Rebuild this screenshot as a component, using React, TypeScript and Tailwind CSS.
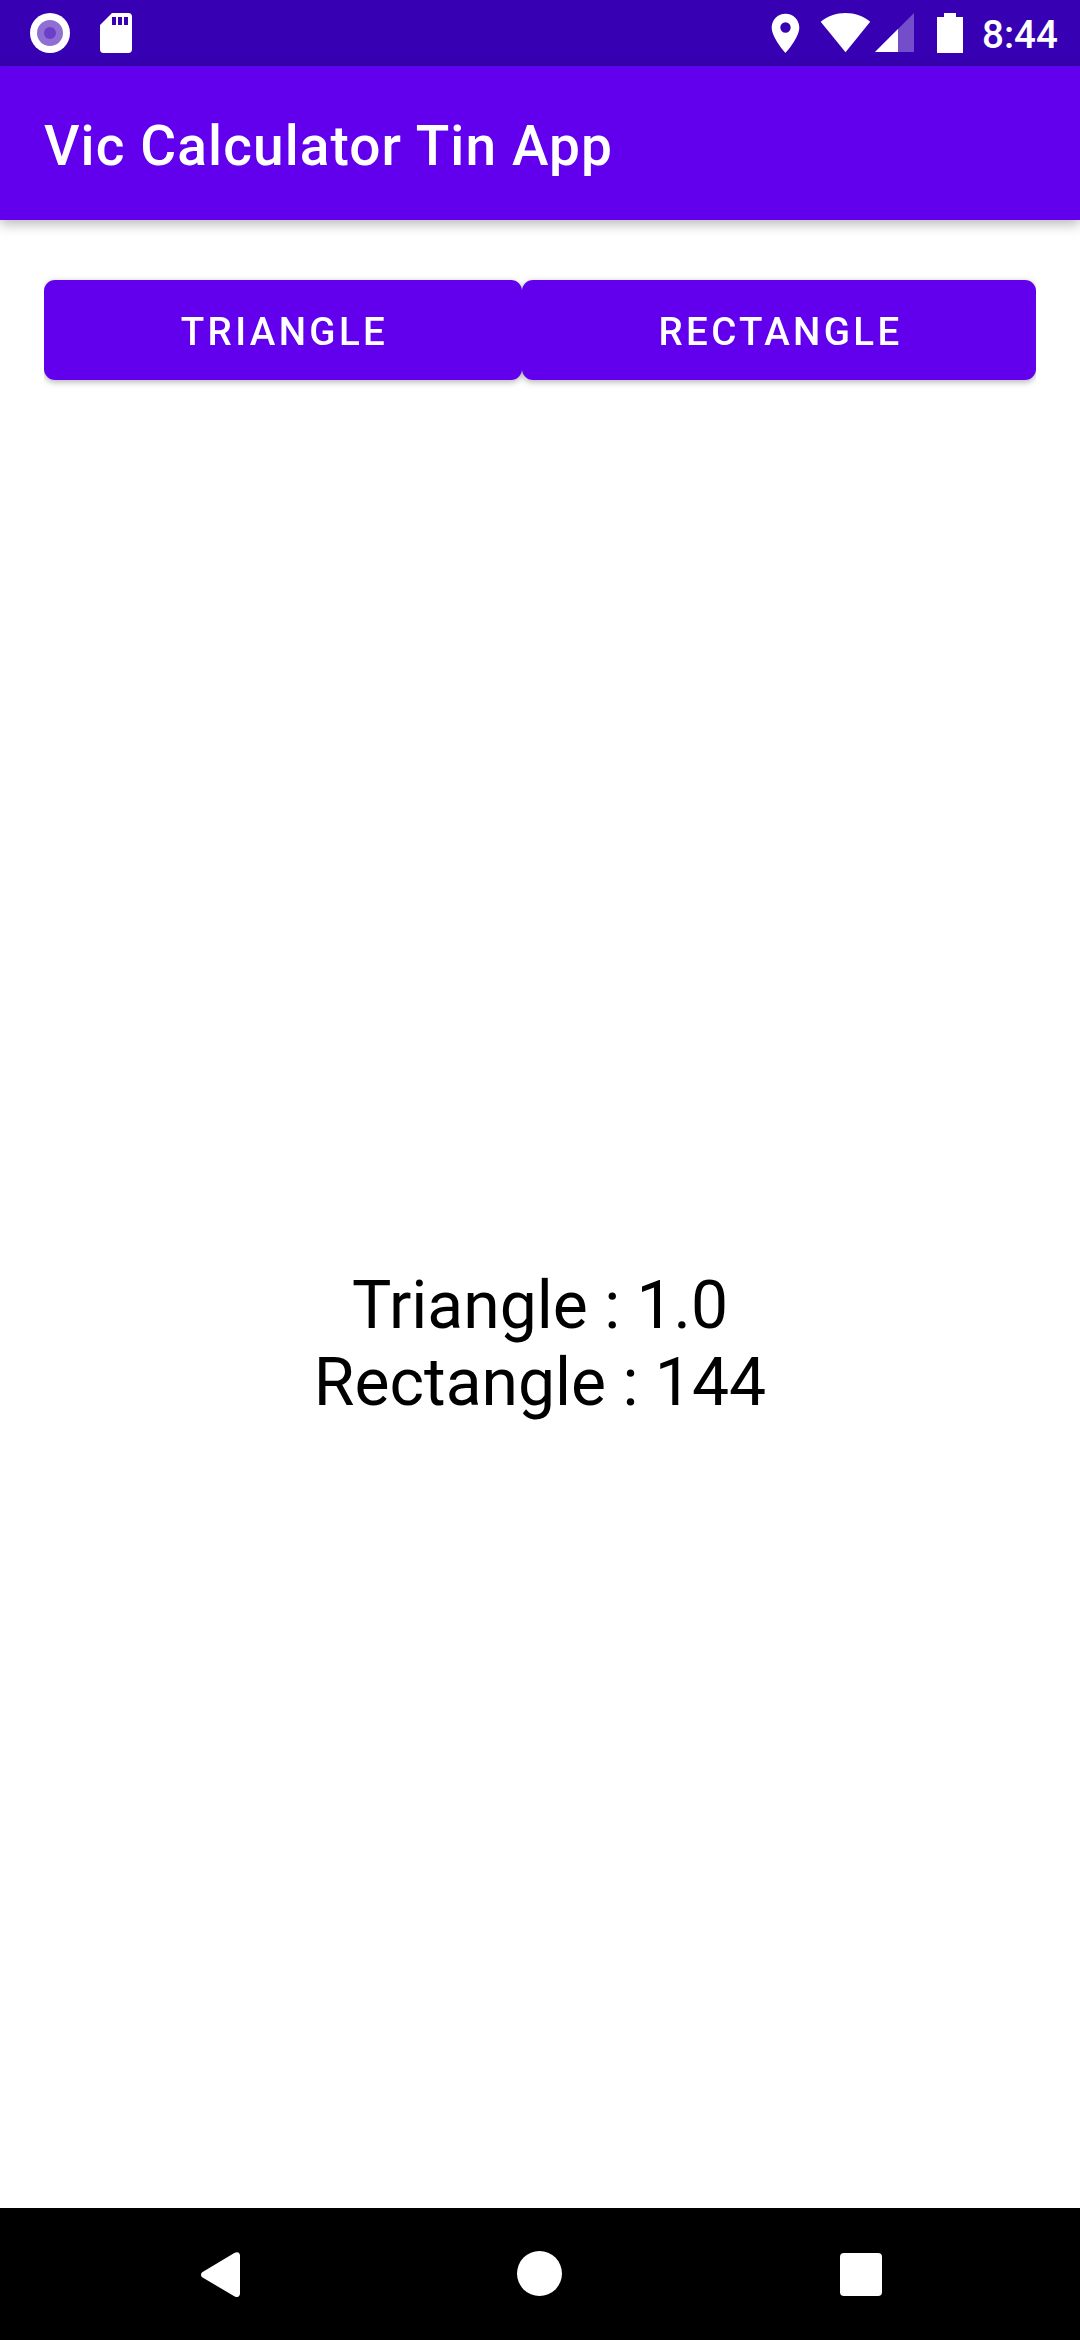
import type { ReactNode } from "react";

function StatusBar() {
  return (
    <header className="flex h-[66px] items-start justify-between bg-[#3700b3] pr-[22px] pl-[30px] text-white">
      <div className="flex pt-[13px]">
        <svg width="40" height="40" viewBox="0 0 40 40">
          <circle cx="20" cy="20" r="20" fill="#fff" />
          <circle cx="20" cy="20" r="13" fill="#8f6fd4" />
          <circle cx="20" cy="20" r="6" fill="#6c3fc8" />
        </svg>
        <svg className="ml-[30px]" width="32" height="40" viewBox="4 2 16 20" fill="#fff">
          <path d="M18.3 2H10L4 8v12.3C4 21.3 4.7 22 5.7 22h12.6c1 0 1.7-.7 1.7-1.7V3.7C20 2.7 19.3 2 18.3 2zm-6.3 6h-2V4h2v4zm3 0h-2V4h2v4zm3 0h-2V4h2v4z" />
        </svg>
      </div>
      <div className="flex">
        <svg className="mt-[13px]" width="193" height="40" viewBox="771 13 193 40" fill="#fff">
          <path d="M785.5 13.7c-7.7 0-13.8 6.1-13.8 13.8C771.7 37.800 785.5 53 785.5 53s13.8-15.2 13.8-25.5c0-7.7-6.1-13.8-13.8-13.8zm0 19a5.200 5.200 0 1 1 0-10.400 5.200 5.200 0 0 1 0 10.400z" />
          <path d="M845.5 52.200 820.7 21.700C827.5 16.300 836.2 13.100 845.5 13.100s18 3.200 24.700 8.600z" />
          <path d="M914 13v39h-39z" fillOpacity=".3" />
          <path d="M898 29v23h-23z" />
          <path d="M937 17h7v-4h12v4h7v36h-26z" />
        </svg>
        <span className="mt-[12px] ml-[18px] w-[76px] text-[38.5px] leading-[45px] font-medium">8:44</span>
      </div>
    </header>
  );
}

function ContainedButton({ children, className }: { children: ReactNode; className: string }) {
  return (
    <button
      className={`${className} h-[100px] rounded-[11px] bg-[#6200ee] pt-[3px] pl-[3px] text-[38.5px] leading-[45px] font-medium tracking-[3.35px] text-white uppercase`}
    >
      {children}
    </button>
  );
}

function NavigationBar() {
  return (
    <nav className="flex h-[132px] bg-black pl-[201px]">
      <svg className="mt-[44px]" width="39" height="45" viewBox="0 0 39 45" fill="#fff">
        <path d="M1.6 20 33.3 1C36 -.7 39 .4 39 3.5v38c0 3.100-3 4.500-5.700 2.800L1.6 25.500c-2.100-1.500-2.100-4 0-5.500z" />
      </svg>
      <div className="mt-[43px] ml-[277px] size-[45px] rounded-full bg-white" />
      <div className="mt-[45px] ml-[277.5px] size-[42.5px] rounded-[4px] bg-white" />
    </nav>
  );
}

export default function App() {
  return (
    <div className="flex h-[2340px] w-[1080px] flex-col overflow-hidden bg-white font-[Roboto,sans-serif]">
      <StatusBar />
      <div className="flex h-[154px] items-start bg-[#6200ee] pt-[48px] pl-[44px] shadow-[0_4px_12px_rgba(0,0,0,0.29)]">
        <h1 className="text-[55px] leading-[64px] font-medium tracking-[1.1px] text-white">Vic Calculator Tin App</h1>
      </div>
      <main className="flex flex-1 flex-col px-[44px] pt-[60px]">
        <div className="[clip-path:inset(-20px_0)]">
          <div className="flex drop-shadow-[0_2px_3px_rgba(0,0,0,0.3)]">
            <ContainedButton className="w-[478px]">Triangle</ContainedButton>
            <ContainedButton className="w-[514px]">Rectangle</ContainedButton>
          </div>
        </div>
        <div className="mt-[887px] text-center text-[66px] leading-[77px] text-black">
          <p>Triangle : 1.0</p>
          <p>Rectangle : 144</p>
        </div>
      </main>
      <NavigationBar />
    </div>
  );
}
